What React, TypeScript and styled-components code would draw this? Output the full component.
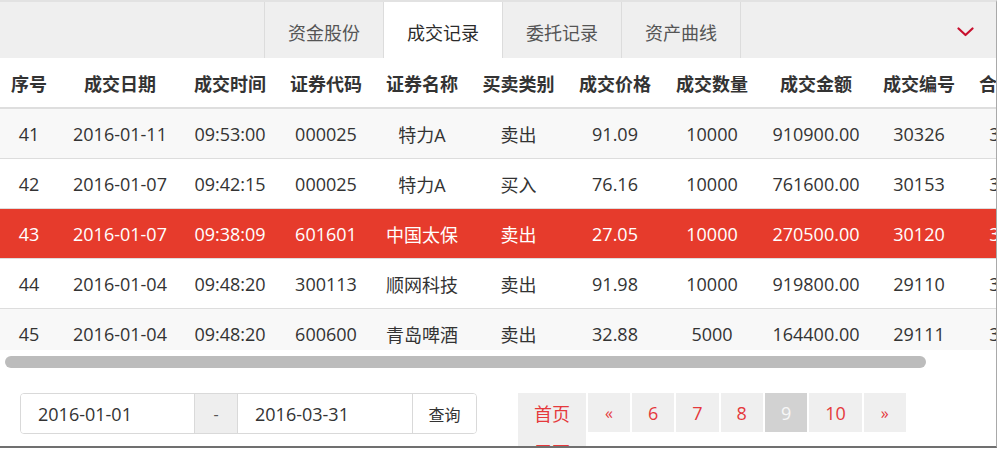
import React from "react";
import styled, { createGlobalStyle } from "styled-components";

const GlobalStyle = createGlobalStyle`
  html, body { margin: 0; padding: 0; background: #ffffff; }
  body { font-family: "Open Sans", "Noto Sans CJK SC", sans-serif; color: #333; }
  * { box-sizing: border-box; }
`;

const COLS = "58px 124px 96px 96px 96px 97px 96px 98px 110px 96px 96px 110px";

const Frame = styled.div`
  width: 997px;
  height: 448px;
  border-top: 2px solid #e2e2e2;
  border-right: 1px solid #a9a9a9;
  border-bottom: 2px solid #707070;
  overflow: hidden;
  display: flex;
  flex-direction: column;
  background: #fff;
`;

const TabBar = styled.div`
  height: 56px;
  flex: none;
  background: #efefef;
  display: flex;
  align-items: stretch;
  padding-left: 264px;
`;

const Tab = styled.div<{ $active?: boolean; $last?: boolean }>`
  width: ${(p) => (p.$last ? 120 : 119)}px;
  border-left: 1px solid #dcdcdc;
  border-right: ${(p) => (p.$last ? "1px solid #dcdcdc" : "none")};
  background: ${(p) => (p.$active ? "#ffffff" : "transparent")};
  color: ${(p) => (p.$active ? "#2b2b2b" : "#555")};
  font-size: 18px;
  display: flex;
  align-items: center;
  justify-content: center;
  padding-top: 3px;
`;

const MenuToggle = styled.div`
  margin-left: auto;
  margin-right: 22px;
  display: flex;
  align-items: center;
  padding-top: 4px;
`;

const Viewport = styled.div`
  height: 292px;
  flex: none;
  overflow: hidden;
`;

const HeadRow = styled.div`
  display: grid;
  grid-template-columns: ${COLS};
  height: 51px;
  border-bottom: 2px solid #dedede;
  background: #fff;
`;

const HeadCell = styled.div`
  display: flex;
  align-items: center;
  justify-content: center;
  white-space: nowrap;
  font-size: 18px;
  font-weight: 700;
  color: #333;
`;

const BodyRow = styled.div<{ $striped?: boolean; $selected?: boolean }>`
  display: grid;
  grid-template-columns: ${COLS};
  height: 50px;
  border-bottom: 1px solid #dddddd;
  background: ${(p) => (p.$selected ? "#e63b2c" : p.$striped ? "#f8f8f8" : "#ffffff")};
  color: ${(p) => (p.$selected ? "#ffffff" : "#333")};
`;

const Cell = styled.div`
  display: flex;
  align-items: center;
  justify-content: center;
  white-space: nowrap;
  font-size: 18px;
`;

const ScrollTrack = styled.div`
  height: 20px;
  flex: none;
  padding: 6px 0 2px 5px;
`;

const ScrollThumb = styled.div`
  width: 921px;
  height: 12px;
  border-radius: 6px;
  background: #bcbcbc;
`;

const Footer = styled.div`
  display: grid;
  grid-template-columns: 498px 498px;
  padding-top: 23px;
`;

const FooterCol = styled.div`
  padding-left: 20px;
`;

const RangeGroup = styled.div`
  display: flex;
  width: 457px;
  height: 41px;
  border: 1px solid #d9d9d9;
  border-radius: 4px;
  overflow: hidden;
`;

const DateInput = styled.div<{ $w: number }>`
  width: ${(p) => p.$w}px;
  display: flex;
  align-items: center;
  padding-left: 17px;
  font-size: 18px;
  color: #333;
  background: #fff;
`;

const Addon = styled.div`
  width: 44px;
  border-left: 1px solid #d9d9d9;
  border-right: 1px solid #d9d9d9;
  background: #eeeeee;
  display: flex;
  align-items: center;
  justify-content: center;
  font-size: 16px;
  color: #555;
`;

const QueryButton = styled.div`
  flex: 1;
  border-left: 1px solid #d9d9d9;
  display: flex;
  align-items: center;
  justify-content: center;
  font-size: 16px;
  color: #333;
  background: #fff;
`;

const Pager = styled.div`
  display: flex;
  flex-wrap: wrap;
  column-gap: 2px;
  row-gap: 0;
  width: 420px;
`;

const PageItem = styled.div<{ $active?: boolean; $arrow?: boolean }>`
  height: 39px;
  min-width: 42px;
  padding: 0 16px;
  display: flex;
  align-items: center;
  justify-content: center;
  background: ${(p) => (p.$active ? "#d2d2d2" : "#efefef")};
  color: ${(p) => (p.$active ? "#f7f7f7" : "#e5393c")};
  font-size: ${(p) => (p.$arrow ? "16px" : "18px")};
`;

const headers = [
  "序号", "成交日期", "成交时间", "证券代码", "证券名称", "买卖类别",
  "成交价格", "成交数量", "成交金额", "成交编号", "合同编号", "股东代码",
];

const rows = [
  ["41", "2016-01-11", "09:53:00", "000025", "特力A", "卖出", "91.09", "10000", "910900.00", "30326", "31426", "0123456789"],
  ["42", "2016-01-07", "09:42:15", "000025", "特力A", "买入", "76.16", "10000", "761600.00", "30153", "31253", "0123456789"],
  ["43", "2016-01-07", "09:38:09", "601601", "中国太保", "卖出", "27.05", "10000", "270500.00", "30120", "31220", "A123456789"],
  ["44", "2016-01-04", "09:48:20", "300113", "顺网科技", "卖出", "91.98", "10000", "919800.00", "29110", "30210", "0123456789"],
  ["45", "2016-01-04", "09:48:20", "600600", "青岛啤酒", "卖出", "32.88", "5000", "164400.00", "29111", "30211", "A123456789"],
];

const tabs = ["资金股份", "成交记录", "委托记录", "资产曲线"];

const pages: { label: string; active?: boolean; arrow?: boolean }[] = [
  { label: "首页" },
  { label: "«", arrow: true },
  { label: "6" },
  { label: "7" },
  { label: "8" },
  { label: "9", active: true },
  { label: "10" },
  { label: "»", arrow: true },
  { label: "尾页" },
];

export default function App() {
  return (
    <>
      <GlobalStyle />
      <Frame>
        <TabBar>
          {tabs.map((t, i) => (
            <Tab key={t} $active={i === 1} $last={i === tabs.length - 1}>
              {t}
            </Tab>
          ))}
          <MenuToggle>
            <svg width="17" height="10" viewBox="0 0 17 10">
              <polyline
                points="1.5,1.5 8.5,8 15.5,1.5"
                fill="none"
                stroke="#c8102e"
                strokeWidth="2.2"
                strokeLinecap="round"
                strokeLinejoin="round"
              />
            </svg>
          </MenuToggle>
        </TabBar>
        <Viewport>
          <HeadRow>
            {headers.map((h) => (
              <HeadCell key={h}>{h}</HeadCell>
            ))}
          </HeadRow>
          {rows.map((r, i) => (
            <BodyRow key={r[0]} $striped={i % 2 === 0} $selected={r[0] === "43"}>
              {r.map((c, j) => (
                <Cell key={j}>{c}</Cell>
              ))}
            </BodyRow>
          ))}
        </Viewport>
        <ScrollTrack>
          <ScrollThumb />
        </ScrollTrack>
        <Footer>
          <FooterCol>
            <RangeGroup>
              <DateInput $w={173}>2016-01-01</DateInput>
              <Addon>-</Addon>
              <DateInput $w={174}>2016-03-31</DateInput>
              <QueryButton>查询</QueryButton>
            </RangeGroup>
          </FooterCol>
          <FooterCol>
            <Pager>
              {pages.map((p) => (
                <PageItem key={p.label} $active={p.active} $arrow={p.arrow}>
                  {p.label}
                </PageItem>
              ))}
            </Pager>
          </FooterCol>
        </Footer>
      </Frame>
    </>
  );
}
